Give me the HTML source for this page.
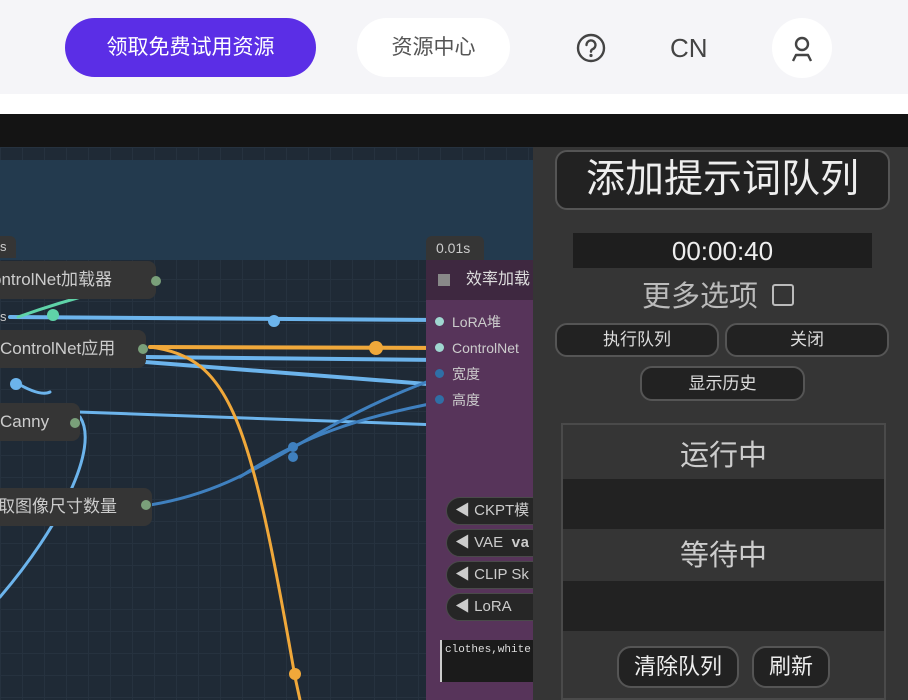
<!DOCTYPE html>
<html><head><meta charset="utf-8"><style>
*{margin:0;padding:0;box-sizing:border-box}
body{width:908px;height:700px;overflow:hidden;position:relative;background:#fff;font-family:"Liberation Sans","Noto Sans CJK SC",sans-serif}
.a{position:absolute}
.node{position:absolute;background:#353535;border-radius:8px;color:#ccc;font-size:17px;line-height:38px;height:38px;padding-left:0;white-space:nowrap;overflow:hidden}
.pb{position:absolute;border:2px solid #555;border-radius:12px;background:#222;color:#ddd;text-align:center}
.w{position:absolute;left:446px;width:100px;height:28px;border-radius:14px;background:#262626;border:1px solid #4a4a4a;color:#ccc;font-size:15px;line-height:26px;padding-left:8px;white-space:nowrap;overflow:hidden}
</style></head><body>
<div class="a" style="left:0;top:0;width:908px;height:94px;background:#f5f5f8"></div>
<div class="a" style="left:65px;top:18px;width:251px;height:59px;border-radius:30px;background:#5b2ee6;color:#fff;font-size:21px;line-height:59px;text-align:center">领取免费试用资源</div>
<div class="a" style="left:357px;top:18px;width:153px;height:59px;border-radius:30px;background:#fff;color:#555;font-size:21px;line-height:59px;text-align:center">资源中心</div>
<svg class="a" style="left:574px;top:31px" width="34" height="34" viewBox="0 0 34 34"><circle cx="17" cy="17" r="13" fill="none" stroke="#444" stroke-width="2.4"/><path d="M12.5 14a4.5 4.5 0 1 1 6 4.2c-1.2.5-1.5 1.2-1.5 2.5" fill="none" stroke="#444" stroke-width="2.4" stroke-linecap="round"/><circle cx="17" cy="24.5" r="1.6" fill="#444"/></svg>
<div class="a" style="left:670px;top:30px;font-size:26px;color:#444;line-height:36px">CN</div>
<div class="a" style="left:772px;top:18px;width:60px;height:60px;border-radius:30px;background:#fff"></div>
<svg class="a" style="left:788px;top:34px" width="28" height="30" viewBox="0 0 28 30"><circle cx="14" cy="10" r="6" fill="none" stroke="#444" stroke-width="2.4"/><path d="M5 27l3-6h12l3 6" fill="none" stroke="#444" stroke-width="2.4" stroke-linejoin="round"/></svg>
<div class="a" style="left:0;top:114px;width:908px;height:33px;background:#141414"></div>
<div class="a" style="left:0;top:147px;width:908px;height:553px;background:#1f2a36;background-image:linear-gradient(#26323f 1px,transparent 1px),linear-gradient(90deg,#26323f 1px,transparent 1px);background-size:22px 22px"></div>
<div class="a" style="left:0;top:160px;width:533px;height:100px;background:#233a4e"></div>
<svg class="a" style="left:0;top:147px" width="533" height="553">
<g fill="none" stroke-linecap="round">
<path d="M10 170 L440 173" stroke="#6cb4ec" stroke-width="4"/>
<path d="M18 170 Q60 155 100 145" stroke="#5fd3a8" stroke-width="3"/>
<path d="M145 210 L440 213" stroke="#6cb4ec" stroke-width="4"/>
<path d="M145 215 L440 238" stroke="#6cb4ec" stroke-width="4"/>
<path d="M78 265 L440 278" stroke="#6cb4ec" stroke-width="3"/>
<path d="M150 358 C260 340 300 280 440 230" stroke="#3f80bf" stroke-width="3"/>
<path d="M240 330 C300 290 360 270 440 255" stroke="#3f80bf" stroke-width="3"/>
<path d="M15 235 Q40 250 50 245" stroke="#6cb4ec" stroke-width="3"/>
<path d="M80 270 C100 300 60 380 0 450" stroke="#6cb4ec" stroke-width="3"/>
<path d="M150 200 L440 201" stroke="#f0a83a" stroke-width="4"/>
<path d="M150 200 C230 210 250 270 295 530 L300 553" stroke="#f0a83a" stroke-width="3"/>
</g>
<circle cx="274" cy="174" r="6" fill="#6cb4ec"/><circle cx="376" cy="201" r="7" fill="#f0a83a"/><circle cx="53" cy="168" r="6" fill="#5fd3a8"/><circle cx="16" cy="237" r="6" fill="#6cb4ec"/><circle cx="295" cy="527" r="6" fill="#f0a83a"/><circle cx="293" cy="310" r="5" fill="#3f80bf"/><circle cx="293" cy="300" r="5" fill="#3f80bf"/>
</svg>
<div class="a" style="left:0;top:236px;width:16px;height:22px;background:#353535;border-radius:0 6px 0 0;color:#ccc;font-size:13px;line-height:22px">s</div>
<div class="node" style="left:-8px;top:261px;width:164px">ontrolNet加载器</div>
<div class="a" style="left:151px;top:276px;width:10px;height:10px;border-radius:5px;background:#7aa07a"></div>
<div class="a" style="left:0;top:309px;color:#ccc;font-size:13px">s</div>
<div class="node" style="left:-8px;top:330px;width:154px;padding-left:8px">ControlNet应用</div>
<div class="a" style="left:138px;top:344px;width:10px;height:10px;border-radius:5px;background:#7aa07a"></div>
<div class="node" style="left:-8px;top:403px;width:88px;padding-left:8px">Canny</div>
<div class="a" style="left:70px;top:418px;width:10px;height:10px;border-radius:5px;background:#7aa07a"></div>
<div class="node" style="left:-8px;top:488px;width:160px;padding-left:6px">取图像尺寸数量</div>
<div class="a" style="left:141px;top:500px;width:10px;height:10px;border-radius:5px;background:#7aa07a"></div>
<div class="a" style="left:426px;top:236px;width:58px;height:24px;background:#353535;border-radius:6px 6px 0 0;color:#ccc;font-size:14px;line-height:24px;padding-left:10px">0.01s</div>
<div class="a" style="left:426px;top:260px;width:107px;height:440px;background:#57345a"></div>
<div class="a" style="left:426px;top:260px;width:107px;height:40px;background:#3e2840;color:#ddd;font-size:16px;line-height:40px;padding-left:40px;white-space:nowrap;overflow:hidden">效率加载</div>
<div class="a" style="left:438px;top:274px;width:12px;height:12px;background:#888"></div>
<div class="a" style="left:426px;top:309px;width:107px;color:#ccc;font-size:14px;line-height:26px;white-space:nowrap;overflow:hidden;padding-left:26px">LoRA堆<br>ControlNet<br>宽度<br>高度</div>
<div class="a" style="left:435px;top:317px;width:9px;height:9px;border-radius:5px;background:#9fd6d0"></div>
<div class="a" style="left:435px;top:343px;width:9px;height:9px;border-radius:5px;background:#9fd6d0"></div>
<div class="a" style="left:435px;top:369px;width:9px;height:9px;border-radius:5px;background:#2f6fa6"></div>
<div class="a" style="left:435px;top:395px;width:9px;height:9px;border-radius:5px;background:#2f6fa6"></div>
<div class="w" style="top:497px">◀ CKPT模</div>
<div class="w" style="top:529px">◀ VAE &nbsp;<b style="font-family:'Liberation Mono',monospace">va</b></div>
<div class="w" style="top:561px">◀ CLIP Sk</div>
<div class="w" style="top:593px">◀ LoRA</div>
<div class="a" style="left:440px;top:640px;width:93px;height:42px;background:#1b1b1b;border-left:2px solid #ccc;color:#ddd;font-family:'Liberation Mono',monospace;font-size:11px;padding:4px 3px;white-space:nowrap;overflow:hidden">clothes,white</div>
<div class="a" style="left:533px;top:147px;width:375px;height:553px;background:#353535"></div>
<div class="pb" style="left:555px;top:150px;width:335px;height:60px;font-size:39px;line-height:56px;color:#eee">添加提示词队列</div>
<div class="a" style="left:573px;top:233px;width:299px;height:35px;background:#1e1e1e;color:#eee;font-size:26px;line-height:36px;text-align:center">00:00:40</div>
<div class="a" style="left:642px;top:279px;font-size:29px;color:#bbb;line-height:36px">更多选项</div>
<div class="a" style="left:772px;top:284px;width:22px;height:22px;border:2px solid #bbb;border-radius:3px"></div>
<div class="pb" style="left:555px;top:323px;width:164px;height:34px;font-size:17px;line-height:30px">执行队列</div>
<div class="pb" style="left:725px;top:323px;width:164px;height:34px;font-size:17px;line-height:30px">关闭</div>
<div class="pb" style="left:640px;top:366px;width:165px;height:35px;font-size:17px;line-height:31px">显示历史</div>
<div class="a" style="left:561px;top:423px;width:325px;height:277px;border:2px solid #4a4a4a;background:#353535"></div>
<div class="a" style="left:563px;top:436px;width:321px;text-align:center;font-size:29px;color:#ccc;line-height:40px">运行中</div>
<div class="a" style="left:563px;top:479px;width:321px;height:50px;background:#222"></div>
<div class="a" style="left:563px;top:536px;width:321px;text-align:center;font-size:29px;color:#ccc;line-height:40px">等待中</div>
<div class="a" style="left:563px;top:581px;width:321px;height:50px;background:#222"></div>
<div class="pb" style="left:617px;top:646px;width:122px;height:42px;font-size:22px;line-height:38px;border-radius:14px;color:#eee">清除队列</div>
<div class="pb" style="left:752px;top:646px;width:78px;height:42px;font-size:22px;line-height:38px;border-radius:14px;color:#eee">刷新</div>
</body></html>
